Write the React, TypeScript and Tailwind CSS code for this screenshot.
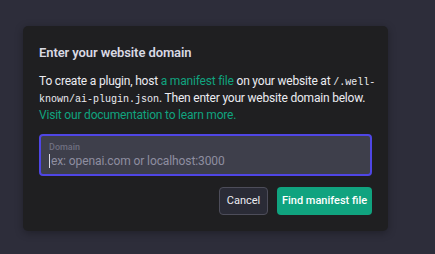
export default function App() {
  return (
    <div className="h-[254px] w-full bg-[#2d2d3a] pl-[23px] pt-[26px] font-['Roboto',sans-serif]">
      <div className="w-[365px] rounded-[5px] bg-[#1f1f21] px-4 pb-4 pt-[17px] shadow-[0_2px_8px_rgba(0,0,0,0.3)]">
        <h2 className="text-[13px] font-semibold leading-5 tracking-[-0.1px] text-[#d9d9e3]">
          Enter your website domain
        </h2>
        <p className="mt-[10px] whitespace-nowrap text-[12px] leading-[17px] tracking-[-0.2px] text-[#ececf1]">
          To create a plugin, host{" "}
          <span className="text-[#10a37f]">a manifest file</span> on your
          website at{" "}
          <code className="font-['Liberation_Mono',monospace] text-[10px] leading-none tracking-normal">
            /.well-
          </code>
          <br />
          <code className="font-['Liberation_Mono',monospace] text-[10px] leading-none tracking-normal">
            known/ai-plugin.json
          </code>
          . Then enter your website domain below.
          <br />
          <span className="text-[#10a37f]">
            Visit our documentation to learn more.
          </span>
        </p>
        <div className="mt-[10px] flex h-[42px] flex-col justify-center rounded-[4px] border-2 border-[#4f46e5] bg-[#3e3f4b] px-2">
          <span className="text-[9px] font-medium leading-3 text-[#6e6e80]">
            Domain
          </span>
          <div className="flex items-center text-[12px] leading-4 tracking-[-0.1px] text-[#8e8ea0]">
            <span className="mr-px h-[14px] w-px bg-[#d9d9e3]" />
            ex: openai.com or localhost:3000
          </div>
        </div>
        <div className="mt-[11px] flex justify-end gap-[9px]">
          <button className="h-7 w-[49px] rounded-[4px] border border-[#4d4d5a] bg-[#2a2b36] text-[11px] text-[#ececf1]">
            Cancel
          </button>
          <button className="h-7 w-[95px] rounded-[4px] bg-[#10a37f] text-[11px] font-medium text-white">
            Find manifest file
          </button>
        </div>
      </div>
    </div>
  );
}
